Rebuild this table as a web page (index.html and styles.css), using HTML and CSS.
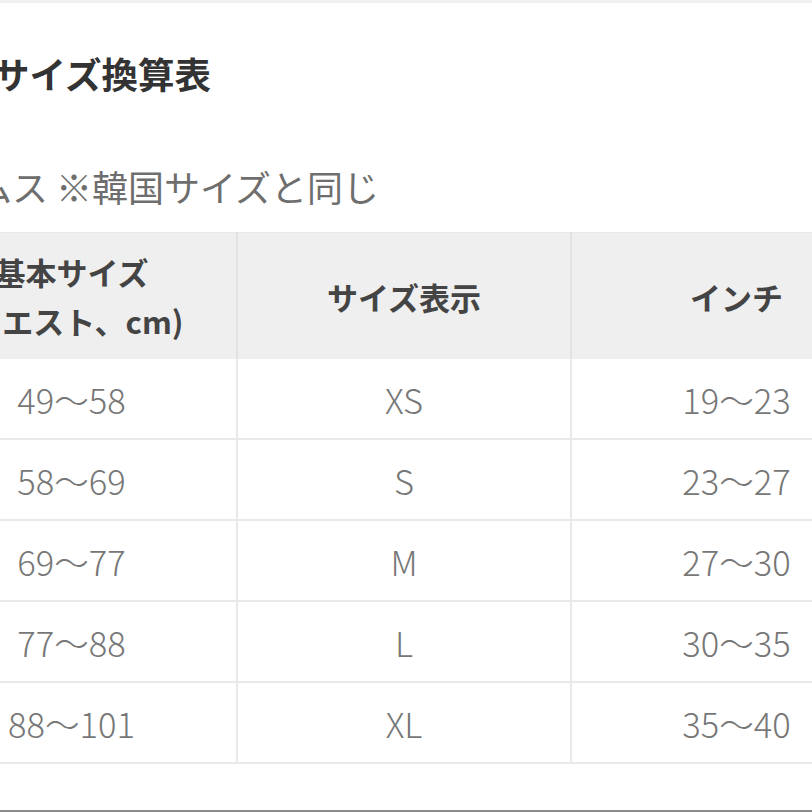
FILE: index.html
```html
<!DOCTYPE html>
<html lang="ja">
<head>
<meta charset="utf-8">
<title>サイズ換算表</title>
<link rel="stylesheet" href="styles.css">
</head>
<body>
<div class="page">
  <div class="topbar"></div>
  <h2 class="title">サイズ換算表</h2>
  <p class="note">ムス ※韓国サイズと同じ</p>
  <div class="table-wrap">
    <table class="size-table">
      <colgroup>
        <col class="c1">
        <col class="c2">
        <col class="c3">
      </colgroup>
      <thead>
        <tr>
          <th>基本サイズ<br>(ウエスト、cm)</th>
          <th>サイズ表示</th>
          <th>インチ</th>
        </tr>
      </thead>
      <tbody>
        <tr><td>49〜58</td><td>XS</td><td>19〜23</td></tr>
        <tr><td>58〜69</td><td>S</td><td>23〜27</td></tr>
        <tr><td>69〜77</td><td>M</td><td>27〜30</td></tr>
        <tr><td>77〜88</td><td>L</td><td>30〜35</td></tr>
        <tr><td>88〜101</td><td>XL</td><td>35〜40</td></tr>
      </tbody>
    </table>
  </div>
  <div class="bottombar"></div>
</div>
</body>
</html>
```
FILE: styles.css
```css
html, body {
  margin: 0;
  padding: 0;
  background: #ffffff;
}

body {
  font-family: "Noto Sans CJK JP", "Noto Sans", sans-serif;
}

.page {
  width: 812px;
  height: 812px;
  overflow: hidden;
  display: flex;
  flex-direction: column;
}

.topbar {
  height: 3px;
  background: #f0f0f0;
  flex: none;
}

.title {
  margin: 53px 0 0 -7px;
  font-size: 36.5px;
  line-height: 36px;
  font-weight: 700;
  color: #333333;
  white-space: nowrap;
}

.note {
  margin: 76px 0 0 -24px;
  font-size: 36px;
  line-height: 36px;
  font-weight: 400;
  color: #6e6e6e;
  white-space: nowrap;
}

.table-wrap {
  margin: 28px 0 0 -93px;
  width: 994px;
  flex: none;
}

.size-table {
  width: 994px;
  table-layout: fixed;
  border-collapse: collapse;
}

.c1 { width: 330px; }
.c2 { width: 334px; }
.c3 { width: 330px; }

.size-table th {
  height: 126px;
  padding: 0;
  background: #efefef;
  color: #444444;
  font-size: 31px;
  line-height: 49px;
  font-weight: 700;
  text-align: center;
  vertical-align: middle;
  border-top: 1px solid #e9e9e9;
  border-left: 2px solid #e2e2e2;
  white-space: nowrap;
}

.size-table td {
  height: 79px;
  padding: 0;
  color: #777777;
  font-size: 34.5px;
  line-height: 40px;
  font-weight: 300;
  text-align: center;
  vertical-align: middle;
  border-bottom: 2px solid #e9e9e9;
  border-left: 2px solid #e9e9e9;
}

.size-table th:first-child,
.size-table td:first-child {
  border-left: none;
}

.bottombar {
  margin-top: auto;
  height: 2px;
  background: #8c8c8c;
  flex: none;
}
```
